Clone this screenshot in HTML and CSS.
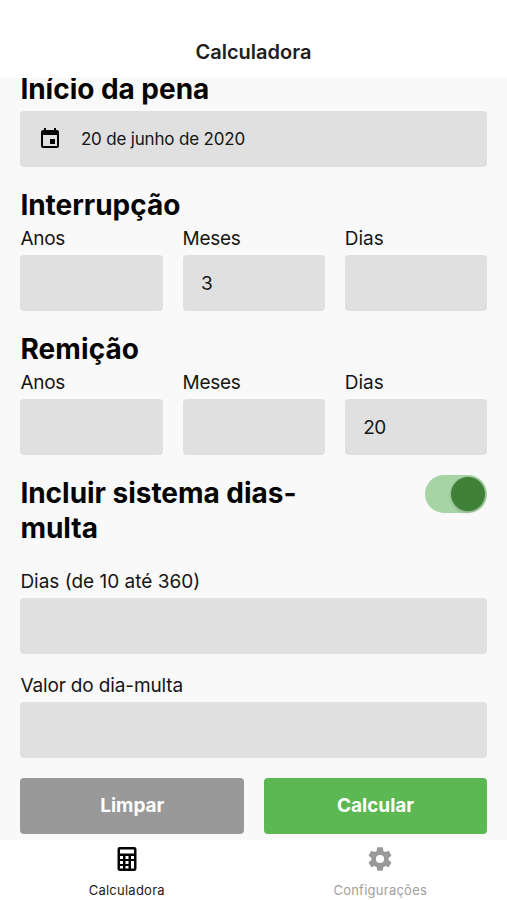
FILE: index.html
```html
<!DOCTYPE html>
<html lang="pt-BR">
<head>
<meta charset="utf-8">
<title>Calculadora</title>
<link rel="stylesheet" href="styles.css">
</head>
<body>
<div class="app">
  <header class="header"><h1 class="header-title">Calculadora</h1></header>
  <main class="content">
    <section class="group group-first">
      <h2 class="heading">Início da pena</h2>
      <div class="field date">
        <svg class="date-icon" viewBox="0 0 24 24"><path d="M17 12h-5v5h5v-5zM16 1v2H8V1H6v2H5c-1.11 0-1.99.9-1.99 2L3 19c0 1.1.89 2 2 2h14c1.1 0 2-.9 2-2V5c0-1.1-.9-2-2-2h-1V1h-2zm3 18H5V8h14v11z"/></svg>
        <span class="date-text">20 de junho de 2020</span>
      </div>
    </section>
    <section class="group">
      <h2 class="heading">Interrupção</h2>
      <div class="columns">
        <div><div class="label short">Anos</div><div class="field"></div></div>
        <div><div class="label short">Meses</div><div class="field">3</div></div>
        <div><div class="label">Dias</div><div class="field"></div></div>
      </div>
    </section>
    <section class="group">
      <h2 class="heading remission">Remição</h2>
      <div class="columns">
        <div><div class="label short">Anos</div><div class="field"></div></div>
        <div><div class="label short">Meses</div><div class="field"></div></div>
        <div><div class="label">Dias</div><div class="field number">20</div></div>
      </div>
    </section>
    <section class="group switch-row">
      <h2 class="heading">Incluir sistema dias-<br>multa</h2>
      <div class="switch"><div class="thumb"></div></div>
    </section>
    <section class="group"><div class="label">Dias (de 10 até 360)</div><div class="field"></div></section>
    <section class="group"><div class="label value-label">Valor do dia-multa</div><div class="field"></div></section>
    <div class="buttons">
      <div class="button clear">Limpar</div>
      <div class="button calculate">Calcular</div>
    </div>
  </main>
  <nav class="tabs">
    <div class="tab active">
      <svg class="tab-icon" viewBox="0 0 26 26"><path fill-rule="evenodd" d="M5.800 1h14.400A2.300 2.300 0 0 1 22.500 3.300v19.400a2.300 2.300 0 0 1-2.300 2.300H5.800a2.300 2.300 0 0 1-2.300-2.300V3.300A2.300 2.300 0 0 1 5.800 1zM6 3.500v4h14v-4zM6 10v3h3v-3zm5.500 0v3h3v-3zm5.500 0v3h3v-3zM6 15v3h3v-3zm5.500 0v3h3v-3zm5.500 0v7.500h3V15zM6 20v2.500h3V20zm5.500 0v2.500h3V20z"/></svg>
      <span class="tab-label">Calculadora</span>
    </div>
    <div class="tab">
      <svg class="tab-icon gear" viewBox="0 0 24 24"><path d="M12 15.5A3.5 3.5 0 0 1 8.500 12 3.500 3.500 0 0 1 12 8.500a3.500 3.500 0 0 1 3.500 3.500 3.500 3.500 0 0 1-3.500 3.500m7.430-2.530c.04-.32.07-.64.07-.97s-.03-.66-.07-1l2.110-1.630c.19-.15.24-.42.12-.64l-2-3.460c-.12-.22-.39-.31-.61-.22l-2.490 1c-.52-.39-1.060-.73-1.690-.98l-.37-2.650A.506.506 0 0 0 14 2h-4c-.25 0-.46.18-.5.420l-.37 2.650c-.63.25-1.170.590-1.690.980l-2.490-1c-.22-.09-.49 0-.61.220l-2 3.460c-.13.220-.07.490.12.640L4.570 11c-.04.340-.07.670-.07 1s.03.650.07.970l-2.110 1.660c-.19.150-.25.420-.12.640l2 3.460c.12.220.39.300.61.220l2.490-1.010c.52.400 1.060.740 1.690.990l.37 2.650c.04.240.25.420.5.420h4c.25 0 .46-.18.5-.42l.37-2.650c.63-.26 1.170-.59 1.690-.99l2.490 1.010c.22.080.49 0 .61-.22l2-3.460c.12-.22.07-.49-.12-.64z"/></svg>
      <span class="tab-label">Configurações</span>
    </div>
  </nav>
</div>
</body>
</html>
```
FILE: styles.css
```css
* { box-sizing: border-box; }
body { margin: 0; font-family: Inter, "Liberation Sans", sans-serif; color: #151515; background: #f9f9f9; }
.app { display: flex; flex-direction: column; height: 900px; overflow: hidden; }
.header { flex: none; height: 78px; padding-top: 38px; background: #fff; text-align: center; }
.header-title { margin: 0; font-size: 20px; line-height: 28px; font-weight: 600; color: #202022; }
.content { flex: none; height: 761.5px; overflow: hidden; padding: 0 19.6px 0 20.4px; background: #f9f9f9; }
.group { margin-bottom: 20px; }
.group-first { margin-top: -7px; }
.heading { margin: 0 0 4px; padding-top: 1px; font-size: 28px; line-height: 35px; font-weight: 700; letter-spacing: -.03px; color: #050505; white-space: nowrap; }
.remission { letter-spacing: .1px; }
.columns { display: grid; grid-template-columns: repeat(3, 1fr); gap: 19.5px; }
.label { height: 23px; margin-bottom: 5px; font-size: 19px; line-height: 23px; white-space: nowrap; }
.short { letter-spacing: -.3px; }
.value-label { letter-spacing: -.14px; }
.field { display: flex; align-items: center; height: 56px; padding: 0 18.5px; border-radius: 4px; background: #e0e0e0; font-size: 19px; }
.number { letter-spacing: -.6px; }
.date-icon { width: 24px; height: 24px; fill: #050505; }
.date-text { margin-left: 18.5px; font-size: 17px; letter-spacing: -.18px; }
.date { padding-left: 18px; }
.switch-row { display: flex; justify-content: space-between; align-items: flex-start; margin-bottom: 19.5px; }
.switch { display: flex; justify-content: flex-end; align-items: center; width: 62.5px; height: 38px; padding: 2px; border-radius: 19px; background: #a6d4a4; }
.thumb { width: 34px; height: 34px; border-radius: 50%; background: #3e8137; box-shadow: 0 1px 3px rgba(0, 0, 0, .25); }
.buttons { display: grid; grid-template-columns: 1fr 1fr; gap: 19.5px; }
.button { display: flex; align-items: center; justify-content: center; height: 56px; border-radius: 4px; color: #fff; font-size: 19px; font-weight: 700; }
.clear { background: #999; }
.calculate { background: #5bb853; }
.tabs { display: flex; flex: 1; background: #fff; }
.tab { display: flex; flex: 1; flex-direction: column; align-items: center; padding-top: 6.5px; color: #a0a0a0; }
.active { color: #1a1a1a; }
.tab-icon { width: 26px; height: 26px; fill: #050505; }
.gear { width: 28px; height: 28px; margin: -1px 0; fill: #999; }
.tab-label { margin-top: 9.5px; font-size: 13px; line-height: 17px; letter-spacing: .25px; }
```
